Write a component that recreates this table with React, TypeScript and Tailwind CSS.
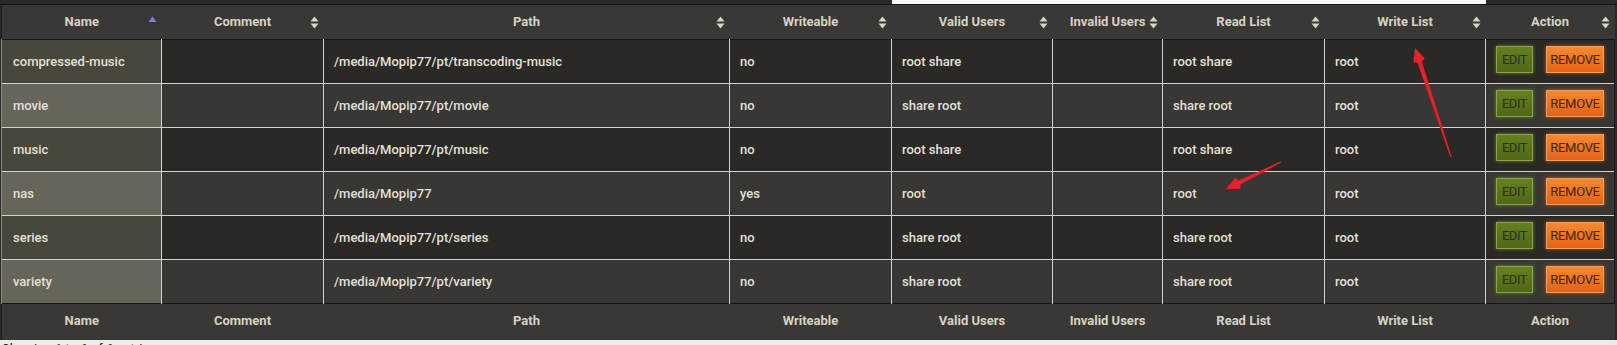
import React from "react";

type Row = {
  name: string;
  path: string;
  writeable: string;
  valid: string;
  read: string;
  write: string;
};

const rows: Row[] = [
  { name: "compressed-music", path: "/media/Mopip77/pt/transcoding-music", writeable: "no", valid: "root share", read: "root share", write: "root" },
  { name: "movie", path: "/media/Mopip77/pt/movie", writeable: "no", valid: "share root", read: "share root", write: "root" },
  { name: "music", path: "/media/Mopip77/pt/music", writeable: "no", valid: "root share", read: "root share", write: "root" },
  { name: "nas", path: "/media/Mopip77", writeable: "yes", valid: "root", read: "root", write: "root" },
  { name: "series", path: "/media/Mopip77/pt/series", writeable: "no", valid: "share root", read: "share root", write: "root" },
  { name: "variety", path: "/media/Mopip77/pt/variety", writeable: "no", valid: "share root", read: "share root", write: "root" },
];

const headers = ["Name", "Comment", "Path", "Writeable", "Valid Users", "Invalid Users", "Read List", "Write List", "Action"];
const widths = [160, 162, 406, 162, 161, 110, 162, 161, 129];

function SortIcon({ active }: { active?: boolean }) {
  return (
    <svg width="9" height="13" viewBox="0 0 9 13" className="block">
      {active ? (
        <path d="M4.5 0.5 L8.5 6 L0.5 6 Z" fill="#7c80e0" />
      ) : (
        <>
          <path d="M4.5 0.5 L8.5 5.5 L0.5 5.5 Z" fill="#d8d4c8" />
          <path d="M4.5 12.5 L8.5 7.5 L0.5 7.5 Z" fill="#d8d4c8" />
        </>
      )}
    </svg>
  );
}

function arrowPoints(tx: number, ty: number, hx: number, hy: number) {
  const dx = hx - tx;
  const dy = hy - ty;
  const len = Math.sqrt(dx * dx + dy * dy);
  const ux = dx / len;
  const uy = dy / len;
  const px = -uy;
  const py = ux;
  const headLen = 15;
  const headW = 6;
  const shaftEnd = 2.2;
  const shaftStart = 0.6;
  const bx = hx - ux * headLen;
  const by = hy - uy * headLen;
  const pts: [number, number][] = [
    [tx + px * shaftStart, ty + py * shaftStart],
    [bx + px * shaftEnd, by + py * shaftEnd],
    [bx + ux * 2 + px * headW, by + uy * 2 + py * headW],
    [hx, hy],
    [bx + ux * 2 - px * headW, by + uy * 2 - py * headW],
    [bx - px * shaftEnd, by - py * shaftEnd],
    [tx - px * shaftStart, ty - py * shaftStart],
  ];
  return pts.map((p) => `${p[0].toFixed(1)},${p[1].toFixed(1)}`).join(" ");
}

export default function App() {
  return (
    <div className="relative w-[1617px] h-[345px] overflow-hidden bg-[#2b2a27] font-['Roboto','Liberation_Sans',sans-serif]">
      {/* top strip */}
      <div className="flex h-[5px] border-b border-[#141414]">
        <div className="w-[892px]" />
        <div className="w-[594px] h-[4px] bg-[#f7f7f7]" />
      </div>

      <table className="table-fixed border-collapse w-[1614px] ml-[1px] border-l border-[#1c1c1c]">
        <colgroup>
          {widths.map((w, i) => (
            <col key={i} style={{ width: w }} />
          ))}
        </colgroup>
        <thead>
          <tr className="h-[34px] bg-[#3a3834] border-b border-[#161616]">
            {headers.map((h, i) => (
              <th key={h} className="p-0 font-bold text-[13px] text-[#d6d2c5]">
                <div className="relative flex items-center justify-center h-[34px]">
                  <span>{h}</span>
                  <span className="absolute right-[5px] top-[11px]">
                    <SortIcon active={i === 0} />
                  </span>
                </div>
              </th>
            ))}
          </tr>
        </thead>
        <tbody>
          {rows.map((r, i) => {
            const odd = i % 2 === 0;
            const bg = odd ? "bg-[#2a2926]" : "bg-[#393733]";
            const nameBg = odd ? "bg-[#47473b]" : "bg-[#67645a]";
            const cell = `h-[44px] px-[10px] py-0 text-left text-[13px] font-medium text-[#e3e0d7] border-l border-[#d2d2d2] ${bg}`;
            return (
              <tr key={r.name} className={i > 0 ? "border-t border-[#d2d2d2]" : ""}>
                <td className={`h-[44px] px-[11px] py-0 text-left text-[13px] font-medium text-[#e3e0d7] border-l border-[#8a8a80] ${nameBg}`}>{r.name}</td>
                <td className={cell}></td>
                <td className={cell}>{r.path}</td>
                <td className={cell}>{r.writeable}</td>
                <td className={cell}>{r.valid}</td>
                <td className={cell}></td>
                <td className={cell}>{r.read}</td>
                <td className={cell}>{r.write}</td>
                <td className={`h-[44px] py-0 pl-[10px] pr-0 border-l border-r border-l-[#d2d2d2] border-r-[#1c1c1c] ${bg}`}>
                  <div className="flex items-center gap-[13px] -mt-[4px]">
                    <button className="w-[37px] h-[27px] border border-[#8aa63c] bg-gradient-to-b from-[#65801f] to-[#4f6818] text-[#2e2e28] text-[13px] tracking-[-0.5px] shadow-[0_0_4px_rgba(150,190,60,0.55)]">
                      EDIT
                    </button>
                    <button className="w-[58px] h-[27px] border border-[#ff9c50] bg-gradient-to-b from-[#f38a2e] to-[#e2621a] text-[#3a2614] text-[13px] tracking-[-0.3px] shadow-[0_0_4px_rgba(255,130,40,0.6)]">
                      REMOVE
                    </button>
                  </div>
                </td>
              </tr>
            );
          })}
        </tbody>
        <tfoot>
          <tr className="h-[36px] bg-[#3a3834] border-t border-[#161616]">
            {headers.map((h) => (
              <th key={h} className="p-0 pb-[2px] font-bold text-[13px] text-[#d6d2c5]">
                {h}
              </th>
            ))}
          </tr>
        </tfoot>
      </table>

      <div className="pl-[2px] pt-[2px] text-[13px] text-[#111] bg-[#ececec] h-[12px] leading-[14px]">
        Showing 1 to 6 of 6 entries
      </div>

      <svg className="absolute left-0 top-0 pointer-events-none" width="1617" height="345">
        <polygon points={arrowPoints(1451, 157, 1415, 48)} fill="#e8202a" />
        <polygon points={arrowPoints(1281, 162, 1226, 189)} fill="#e8202a" />
      </svg>
    </div>
  );
}
